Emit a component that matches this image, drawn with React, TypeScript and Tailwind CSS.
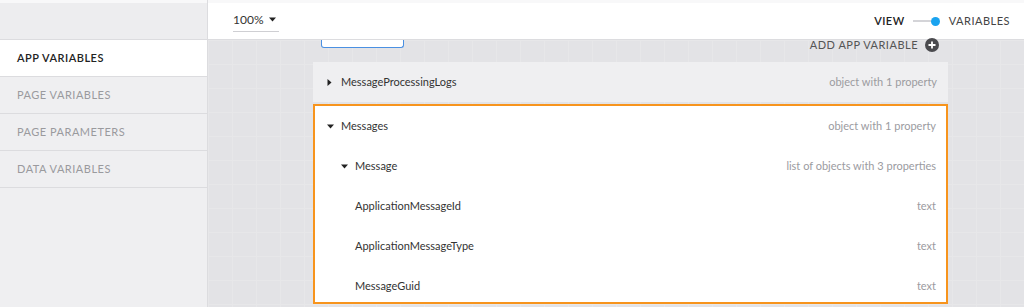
import React from "react";

type Row = {
  name: string;
  desc: string;
  level: number;
  caret?: "down" | "right";
};

const rows: Row[] = [
  { name: "Messages", desc: "object with 1 property", level: 0, caret: "down" },
  { name: "Message", desc: "list of objects with 3 properties", level: 1, caret: "down" },
  { name: "ApplicationMessageId", desc: "text", level: 2 },
  { name: "ApplicationMessageType", desc: "text", level: 2 },
  { name: "MessageGuid", desc: "text", level: 2 },
];

const Caret = ({ dir }: { dir: "down" | "right" }) =>
  dir === "down" ? (
    <svg width="7" height="5" viewBox="0 0 7 5" className="shrink-0">
      <path d="M0 0.5h7L3.5 4.5z" fill="#222" />
    </svg>
  ) : (
    <svg width="5" height="7" viewBox="0 0 5 7" className="shrink-0">
      <path d="M0.5 0v7L4.5 3.5z" fill="#222" />
    </svg>
  );

const sideItems = ["APP VARIABLES", "PAGE VARIABLES", "PAGE PARAMETERS", "DATA VARIABLES"];

export default function App() {
  return (
    <div
      className="flex h-[307px] w-[1024px] flex-col overflow-hidden bg-[#efeff1] text-[11px] text-[#333]"
      style={{ fontFamily: "Lato, 'Open Sans', sans-serif" }}
    >
      <div className="flex h-[307px]">
        {/* Sidebar */}
        <div className="flex w-[208px] shrink-0 flex-col border-r border-[#dcdcdf] bg-[#efeff1]">
          <div className="h-[40px] border-t-[3px] border-b border-t-[#f8f8f9] border-b-[#dcdcdf] bg-[#ededef]" />
          {sideItems.map((item, i) => (
            <div
              key={item}
              className={`flex h-[37px] items-center border-b border-[#dcdcdf] pl-[17px] text-[11px] tracking-[0.5px] ${
                i === 0 ? "bg-white font-semibold text-[#222]" : "text-[#9a9a9e]"
              }`}
            >
              {item}
            </div>
          ))}
        </div>

        {/* Main */}
        <div className="flex flex-1 flex-col">
          <div className="flex h-[40px] shrink-0 items-center justify-between border-t-[3px] border-b border-t-[#f8f8f9] border-b-[#dcdcdf] bg-white pr-[14px] pl-[25px]">
            <div className="flex items-center gap-[5px] border-b border-[#cfcfd3] pr-[3px] pb-[2px] text-[12px] text-[#333]">
              <span>100%</span>
              <Caret dir="down" />
            </div>
            <div className="flex items-center text-[11px] tracking-[0.5px]">
              <span className="font-semibold text-[#222]">VIEW</span>
              <div className="ml-[8px] flex items-center">
                <div className="h-[2px] w-[18px] bg-[#d4d4d8]" />
                <div className="h-[9px] w-[9px] rounded-full bg-[#1aa3ef]" />
              </div>
              <span className="ml-[9px] text-[#444]">VARIABLES</span>
            </div>
          </div>

          <div className="flex-1 bg-[#e3e3e6] bg-[linear-gradient(to_right,#e7e7e9_1px,transparent_1px),linear-gradient(to_bottom,#e7e7e9_1px,transparent_1px)] bg-[size:24px_24px]">
            <div className="ml-[105px] w-[635px]">
              <div className="flex h-[14px] items-start justify-between">
                <div className="ml-[8px] h-[8px] w-[83px] rounded-b-[3px] border-x border-b border-[#4a90e2] bg-white" />
                <div className="mt-[-3px] flex items-center gap-[7px] pr-[9px]">
                  <span className="text-[11px] tracking-[0.5px] text-[#555]">ADD APP VARIABLE</span>
                  <div className="flex h-[14px] w-[14px] items-center justify-center rounded-full bg-[#4a4a4e]">
                    <svg width="8" height="8" viewBox="0 0 8 8">
                      <path d="M4 0.5v7M0.5 4h7" stroke="white" strokeWidth="1.8" />
                    </svg>
                  </div>
                </div>
              </div>

              <div className="mt-[8px] flex h-[40px] items-center justify-between bg-[#efeff1] pr-[11px] pl-[14px]">
                <div className="flex items-center gap-[9px]">
                  <Caret dir="right" />
                  <span>MessageProcessingLogs</span>
                </div>
                <span className="text-[#9b9b9f]">object with 1 property</span>
              </div>

              <div className="mt-[2px] h-[200px] overflow-hidden border-2 border-[#f7941d] bg-white">
                {rows.map((r) => (
                  <div
                    key={r.name}
                    className="flex h-[40px] items-center justify-between pr-[10px]"
                  >
                    <div
                      className={`flex items-center gap-[7px] ${
                        r.level === 0 ? "pl-[12px]" : r.level === 1 ? "pl-[26px]" : "pl-[40px]"
                      }`}
                    >
                      {r.caret && <Caret dir={r.caret} />}
                      <span>{r.name}</span>
                    </div>
                    <span className="text-[#9b9b9f]">{r.desc}</span>
                  </div>
                ))}
              </div>
            </div>
          </div>
        </div>
      </div>
    </div>
  );
}
